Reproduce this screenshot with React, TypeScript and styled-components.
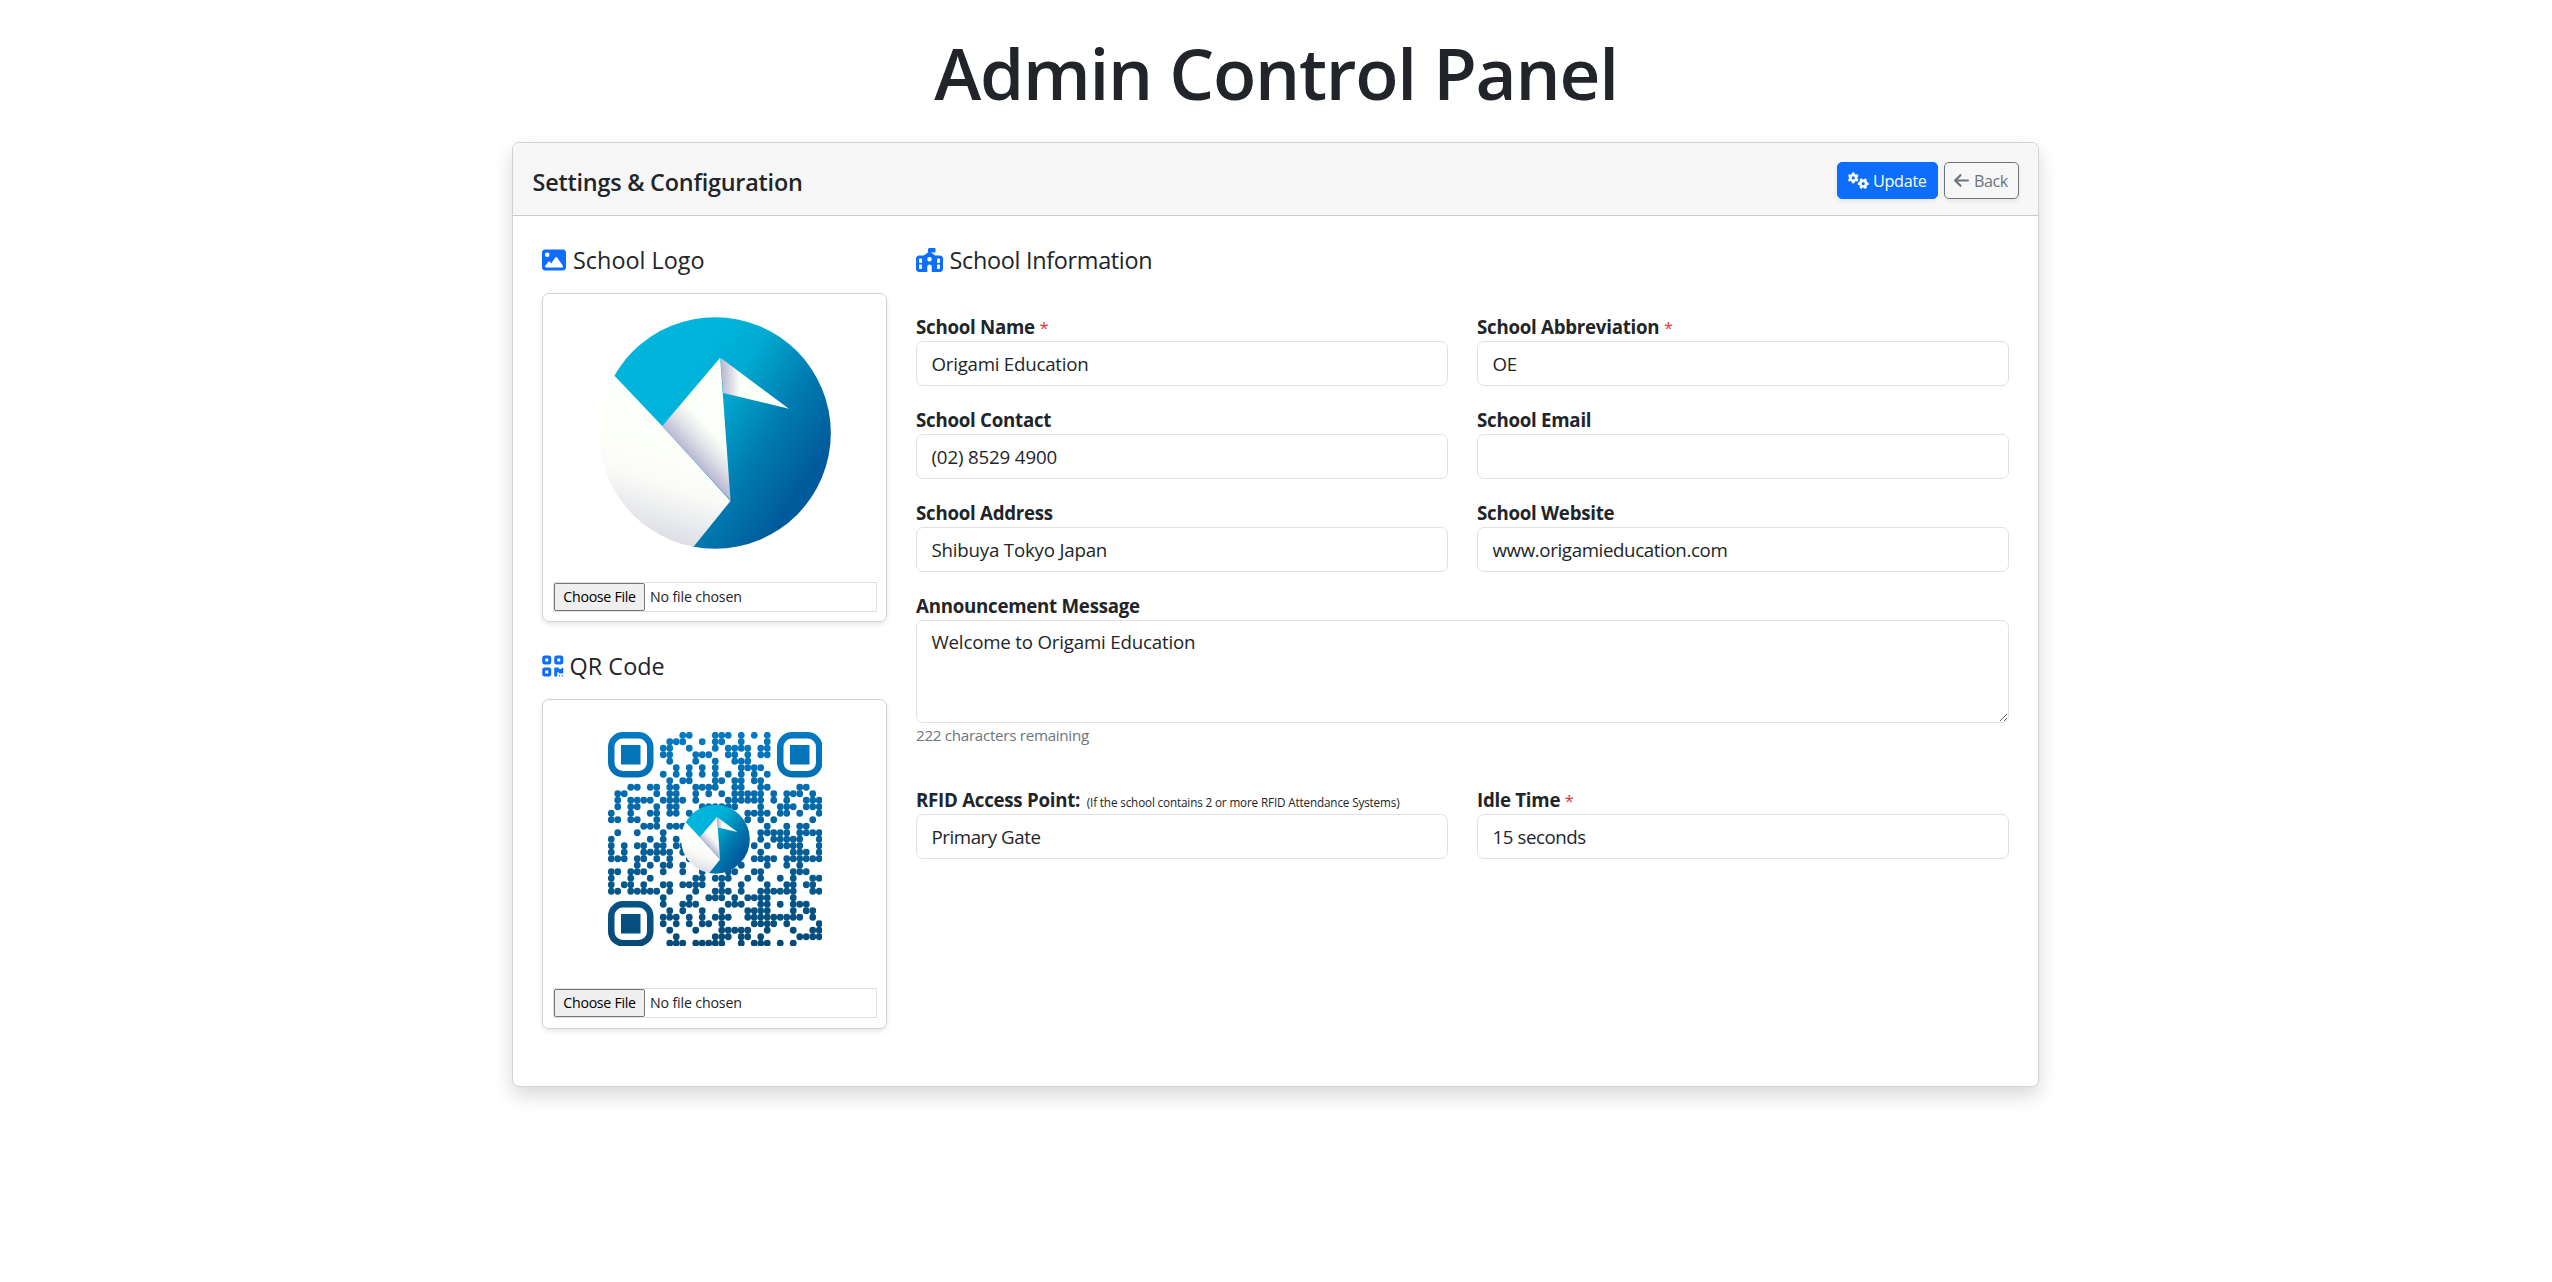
import React, { useState } from 'react';
import styled, { createGlobalStyle, css } from 'styled-components';
import { FaArrowLeft, FaGears, FaImage, FaQrcode, FaSchoolFlag } from 'react-icons/fa6';

const GlobalStyle = createGlobalStyle`
  *, *::before, *::after { box-sizing: border-box; }
  body {
    margin: 0;
    background: #fff;
    color: #212529;
    font-family: "Open Sans", "Noto Sans", sans-serif;
    font-size: 18.7px;
    line-height: 28px;
  }
`;

const Page = styled.main`
  display: flex;
  flex-direction: column;
  align-items: center;
  min-height: 100vh;
  padding: 29px 1px 0 0;
`;

const Title = styled.h1`
  margin: 0 0 26px;
  font-size: 71px;
  font-weight: 600;
  line-height: 87px;
  letter-spacing: -1.22px;
  padding-left: 1px;
`;

const Card = styled.section`
  flex: none;
  width: 1527px;
  height: 945px;
  border: 1px solid #d2d2d3;
  border-radius: 7px;
  background: #fff;
  box-shadow: 0 9px 19px rgba(0, 0, 0, 0.15);
`;

const CardHeader = styled.header`
  display: flex;
  justify-content: space-between;
  height: 73px;
  padding: 19px 19px 0 19.5px;
  border-bottom: 1px solid #cbcbcc;
  border-radius: 6px 6px 0 0;
  background: #f7f7f7;
`;

const HeaderTitle = styled.h2`
  margin: 4px 0 0;
  font-size: 23.4px;
  font-weight: 600;
  line-height: 32px;
  letter-spacing: -0.22px;
`;

const Actions = styled.div`
  display: flex;
  gap: 6px;
`;

const Button = styled.button<{ $variant: 'primary' | 'outline' }>`
  display: flex;
  align-items: center;
  height: 37px;
  border-radius: 5px;
  font: 400 16.2px/24px "Open Sans", sans-serif;
  box-shadow: 0 2px 5px rgba(0, 0, 0, 0.075);

  ${({ $variant }) =>
    $variant === 'primary'
      ? css`
          width: 101px;
          gap: 4px;
          padding: 0 0 0 10px;
          border: 1px solid #0d6efd;
          background: #0d6efd;
          color: #fff;
          letter-spacing: -0.3px;
        `
      : css`
          width: 75px;
          gap: 5px;
          padding: 0 0 0 9px;
          border: 1px solid #6c757d;
          background: transparent;
          color: #6c757d;
          letter-spacing: -0.5px;
        `}
`;

const GearsIcon = styled(FaGears)`
  flex: none;
  width: 21px;
  height: 17px;
  margin-bottom: 1px;
`;

const ArrowIcon = styled(FaArrowLeft)`
  flex: none;
  width: 15px;
  height: 17px;
  margin-bottom: 1px;
`;

const CardBody = styled.div`
  display: grid;
  grid-template-columns: 345px 1093px;
  column-gap: 29px;
  padding: 28px 29px 0;
`;

const Column = styled.div`
  display: flex;
  flex-direction: column;
`;

const SectionTitle = styled.h3<{ $gap: number; $spacing?: number }>`
  display: flex;
  align-items: center;
  gap: ${({ $gap }) => $gap}px;
  height: 32px;
  margin: 0;
  font-size: 23.4px;
  font-weight: 400;
  line-height: 32px;
  letter-spacing: ${({ $spacing = 0 }) => $spacing}px;
`;

const iconStyle = css`
  flex: none;
  height: 24px;
  color: #0d6efd;
`;

const ImageIcon = styled(FaImage)`
  ${iconStyle}
  width: 24px;
`;

const QrIcon = styled(FaQrcode)`
  ${iconStyle}
  width: 21.5px;
`;

const SchoolIcon = styled(FaSchoolFlag)`
  ${iconStyle}
  width: 27px;
`;

const UploadCard = styled.div`
  display: flex;
  flex-direction: column;
  justify-content: space-between;
  align-items: center;
  height: 329px;
  margin: 17px 0 28px;
  padding: 0 9px 9px 10px;
  border: 1px solid #d2d2d3;
  border-radius: 7px;
  box-shadow: 0 2px 5px rgba(0, 0, 0, 0.1);

  &:last-child {
    height: 330px;
    margin-bottom: 0;
    padding-bottom: 10px;
  }
`;

const LogoArt = styled.svg`
  width: 232px;
  height: 232px;
  margin-top: 23px;
`;

const QrArt = styled.svg`
  width: 214.5px;
  height: 214.5px;
  margin-top: 31.5px;
`;

const FilePicker = styled.div`
  display: flex;
  align-items: center;
  gap: 5px;
  align-self: stretch;
  height: 30px;
  border: 1px solid #dee2e6;
`;

const FileButton = styled.button`
  width: 91px;
  height: 28px;
  padding: 0;
  border: 1px solid #767676;
  border-radius: 2px;
  background: #efefef;
  color: #000;
  font: 400 14.2px/24px "Open Sans", sans-serif;
  letter-spacing: -0.3px;
`;

const FileName = styled.span`
  font-size: 14.2px;
  letter-spacing: -0.15px;
`;

const Form = styled.form`
  display: grid;
  grid-template-columns: 532px 532px;
  column-gap: 29px;
  margin-top: 37px;
`;

const Field = styled.div<{ $wide?: boolean; $height?: number }>`
  display: flex;
  flex-direction: column;
  height: ${({ $height = 93 }) => $height}px;
  grid-column: ${({ $wide }) => ($wide ? '1 / -1' : 'auto')};
`;

const Label = styled.label<{ $height?: number }>`
  height: ${({ $height = 28 }) => $height}px;
  font-weight: 700;
  line-height: 28px;
  letter-spacing: -0.26px;
  white-space: nowrap;
`;

const Required = styled.span`
  color: #dc3545;
  font-size: 16.4px;
  font-weight: 400;
`;

const Hint = styled.small`
  margin-left: 2px;
  font-size: 11.7px;
  font-weight: 400;
  letter-spacing: -0.14px;
`;

const controlStyle = css`
  width: 100%;
  padding: 7px 14.5px;
  border: 1px solid #dee2e6;
  border-radius: 7px;
  outline: none;
  background: #fff;
  color: #212529;
  font: 400 18.7px/28px "Open Sans", sans-serif;
`;

const Input = styled.input<{ $spacing?: number }>`
  ${controlStyle}
  height: 45px;
  letter-spacing: ${({ $spacing = -0.2 }) => $spacing}px;
`;

const TextArea = styled.textarea`
  ${controlStyle}
  display: block;
  height: 103px;
  letter-spacing: -0.19px;
  resize: vertical;
`;

const Counter = styled.small`
  color: #6c757d;
  font-size: 15.2px;
  line-height: 25px;
  letter-spacing: -0.3px;
`;

const MARK_SHADE = '#b9b7d2';

/** Crane emblem drawn in its own 695-unit square. */
function CraneMark({ id }: { id: string }) {
  return (
    <g>
      <defs>
        <linearGradient id={`${id}-sky`} gradientUnits="userSpaceOnUse" x1="220" y1="250" x2="610" y2="510">
          <stop offset="0" stopColor="#00b4dc" />
          <stop offset="0.25" stopColor="#00abd2" />
          <stop offset="0.62" stopColor="#007db2" />
          <stop offset="1" stopColor="#005a9c" />
        </linearGradient>
        <linearGradient id={`${id}-body`} gradientUnits="userSpaceOnUse" x1="225" y1="400" x2="135" y2="690">
          <stop offset="0" stopColor="#fdfff9" />
          <stop offset="0.35" stopColor="#fafbf7" />
          <stop offset="1" stopColor="#d6d7e2" />
        </linearGradient>
        <linearGradient id={`${id}-neck`} gradientUnits="userSpaceOnUse" x1="265" y1="410" x2="338" y2="342">
          <stop offset="0" stopColor={MARK_SHADE} />
          <stop offset="0.5" stopColor="#e0e1e8" />
          <stop offset="1" stopColor="#fdfff9" />
        </linearGradient>
        <linearGradient id={`${id}-head`} gradientUnits="userSpaceOnUse" x1="366" y1="0" x2="424" y2="0">
          <stop offset="0" stopColor={MARK_SHADE} />
          <stop offset="1" stopColor="#fdfff9" />
        </linearGradient>
        <clipPath id={`${id}-disc`}>
          <circle cx="347.5" cy="347.5" r="347" />
        </clipPath>
      </defs>
      <g clipPath={`url(#${id}-disc)`}>
        <path d="M43 178 L-5 128 V-5 H700 V700 H270 L388 553 L188 331 Z" fill={`url(#${id}-sky)`} />
        <path d="M47 177 L190 327 L394 551 L282 690 L240 720 L-20 720 L-20 177 Z" fill={`url(#${id}-body)`} />
        <path d="M189 327 L363 122 L394 549 Z" fill={`url(#${id}-neck)`} />
        <path d="M364 122 L569 275 L372 228 Z" fill={`url(#${id}-head)`} />
      </g>
    </g>
  );
}

function SchoolLogo() {
  return (
    <LogoArt viewBox="0 0 695 695" role="img">
      <CraneMark id="logo" />
    </LogoArt>
  );
}

/* Filled modules of each of the 33 rows; the three finder squares are drawn apart. */
const QR_ROWS: number[][] = [
  [11, 12, 16, 17, 18, 20, 22, 24],
  [9, 10, 11, 14, 16, 17, 20, 24],
  [8, 9, 12, 16, 18, 19, 20, 21, 23, 24],
  [8, 9, 13, 14, 15, 18, 19, 21, 23, 24],
  [9, 13, 16, 19, 20, 21],
  [10, 12, 14, 16, 20, 21, 22, 23],
  [8, 10, 12, 14, 16, 18, 20, 22, 24],
  [9, 11, 12, 16, 17, 19, 20, 22, 23],
  [3, 4, 6, 7, 9, 10, 13, 14, 15, 16, 19, 20, 23, 24, 29, 30],
  [1, 2, 7, 9, 10, 13, 15, 17, 19, 20, 21, 22, 23, 25, 27, 28, 29, 31],
  [1, 3, 4, 5, 6, 8, 9, 10, 11, 13, 18, 19, 20, 21, 22, 23, 25, 27, 30, 31, 32],
  [1, 3, 4, 7, 9, 10, 14, 15, 16, 17, 18, 19, 23, 26, 27, 28, 30, 31, 32],
  [0, 3, 6, 7, 9, 10, 12, 21, 22, 23, 24, 26, 27, 29, 32],
  [0, 1, 3, 4, 7, 21, 23, 25, 31],
  [5, 6, 7, 9, 10, 11, 24, 27, 29, 30],
  [1, 4, 8, 23, 24, 25, 26, 27, 29, 30, 31, 32],
  [0, 6, 8, 10, 23, 25, 26, 27, 28, 29, 32],
  [0, 2, 4, 5, 7, 8, 10, 11, 22, 24, 26, 27, 28, 29, 32],
  [0, 2, 5, 6, 7, 8, 9, 11, 23, 28, 29, 30, 32],
  [0, 1, 2, 4, 5, 7, 9, 12, 22, 23, 24, 25, 27, 28, 29, 30, 31, 32],
  [4, 6, 8, 9, 11, 20, 24, 27, 29],
  [0, 1, 3, 4, 5, 8, 11, 14, 18, 19, 22, 23, 28, 29, 30],
  [0, 3, 6, 13, 14, 16, 17, 18, 21, 23, 26, 28, 31, 32],
  [0, 2, 3, 5, 8, 9, 11, 12, 13, 14, 17, 20, 24, 27, 28, 30, 31],
  [0, 1, 3, 4, 5, 6, 7, 9, 13, 16, 17, 18, 20, 23, 24, 25, 26, 27, 28, 31, 32],
  [8, 12, 15, 16, 17, 19, 21, 22, 23, 24, 28],
  [8, 11, 12, 13, 18, 19, 20, 23, 24, 26, 28, 29, 30],
  [9, 11, 14, 17, 21, 22, 23, 24, 28, 30, 31],
  [8, 9, 10, 12, 14, 16, 17, 18, 21, 22, 23, 24, 25, 26, 27, 28, 29, 31],
  [8, 10, 12, 14, 15, 17, 22, 23, 24, 25, 27, 32],
  [9, 13, 17, 18, 19, 20, 21, 24, 28, 31, 32],
  [10, 16, 17, 18, 20, 21, 23, 29, 30, 31, 32],
  [9, 10, 11, 13, 14, 15, 16, 17, 20, 22, 23, 24, 26, 28],
];

const FINDERS: [number, number][] = [
  [0, 0],
  [26, 0],
  [0, 26],
];

function SchoolQr() {
  return (
    <QrArt viewBox="0 0 33 33" role="img">
      <defs>
        <linearGradient id="qr-ink" gradientUnits="userSpaceOnUse" x1="0" y1="0" x2="0" y2="33">
          <stop offset="0" stopColor="#037ac3" />
          <stop offset="1" stopColor="#064a76" />
        </linearGradient>
      </defs>
      <g fill="url(#qr-ink)">
        {QR_ROWS.map((row, y) => row.map((x) => <circle key={`${x}-${y}`} cx={x + 0.5} cy={y + 0.5} r={0.52} />))}
        {FINDERS.map(([x, y]) => (
          <g key={`f${x}-${y}`}>
            <path
              fillRule="evenodd"
              d={`M${x + 2.3} ${y}h2.4a2.3 2.3 0 0 1 2.3 2.3v2.4a2.3 2.3 0 0 1 -2.3 2.3h-2.4a2.3 2.3 0 0 1 -2.3 -2.3v-2.4a2.3 2.3 0 0 1 2.3 -2.3z M${x + 2.3} ${y + 1}a1.3 1.3 0 0 0 -1.3 1.3v2.4a1.3 1.3 0 0 0 1.3 1.3h2.4a1.3 1.3 0 0 0 1.3 -1.3v-2.4a1.3 1.3 0 0 0 -1.3 -1.3z`}
            />
            <rect x={x + 2} y={y + 2} width={3} height={3} />
          </g>
        ))}
      </g>
      <g transform="translate(11.23 11.2) scale(0.01525)">
        <CraneMark id="badge" />
      </g>
    </QrArt>
  );
}

function FileInput() {
  return (
    <FilePicker>
      <FileButton type="button">Choose File</FileButton>
      <FileName>No file chosen</FileName>
    </FilePicker>
  );
}

type TextFieldProps = {
  label: string;
  value: string;
  required?: boolean;
  hint?: string;
  spacing?: number;
  height?: number;
  labelHeight?: number;
};

function TextField({ label, value, required, hint, spacing, height, labelHeight }: TextFieldProps) {
  return (
    <Field $height={height}>
      <Label $height={labelHeight}>
        {label} {required && <Required>*</Required>}
        {hint && <Hint>{hint}</Hint>}
      </Label>
      <Input defaultValue={value} $spacing={spacing} />
    </Field>
  );
}

export default function App() {
  const [message, setMessage] = useState('Welcome to Origami Education');

  return (
    <>
      <GlobalStyle />
      <Page>
        <Title>Admin Control Panel</Title>
        <Card>
          <CardHeader>
            <HeaderTitle>Settings &amp; Configuration</HeaderTitle>
            <Actions>
              <Button $variant="primary">
                <GearsIcon /> Update
              </Button>
              <Button $variant="outline">
                <ArrowIcon /> Back
              </Button>
            </Actions>
          </CardHeader>
          <CardBody>
            <Column>
              <SectionTitle $gap={7}>
                <ImageIcon /> School Logo
              </SectionTitle>
              <UploadCard>
                <SchoolLogo />
                <FileInput />
              </UploadCard>
              <SectionTitle $gap={6} $spacing={0.05}>
                <QrIcon /> QR Code
              </SectionTitle>
              <UploadCard>
                <SchoolQr />
                <FileInput />
              </UploadCard>
            </Column>
            <Column>
              <SectionTitle $gap={6.5} $spacing={-0.3}>
                <SchoolIcon /> School Information
              </SectionTitle>
              <Form>
                <TextField label="School Name" value="Origami Education" required spacing={-0.24} />
                <TextField label="School Abbreviation" value="OE" required />
                <TextField label="School Contact" value="(02) 8529 4900" spacing={-0.15} />
                <TextField label="School Email" value="" />
                <TextField label="School Address" value="Shibuya Tokyo Japan" />
                <TextField label="School Website" value="www.origamieducation.com" spacing={-0.37} />
                <Field $wide $height={194}>
                  <Label>Announcement Message</Label>
                  <TextArea value={message} onChange={(e) => setMessage(e.target.value)} />
                  <Counter>{250 - message.length} characters remaining</Counter>
                </Field>
                <TextField
                  label="RFID Access Point:"
                  value="Primary Gate"
                  hint="(If the school contains 2 or more RFID Attendance Systems)"
                  spacing={-0.44}
                />
                <TextField label="Idle Time" value="15 seconds" required spacing={-0.43} />
              </Form>
            </Column>
          </CardBody>
        </Card>
      </Page>
    </>
  );
}
